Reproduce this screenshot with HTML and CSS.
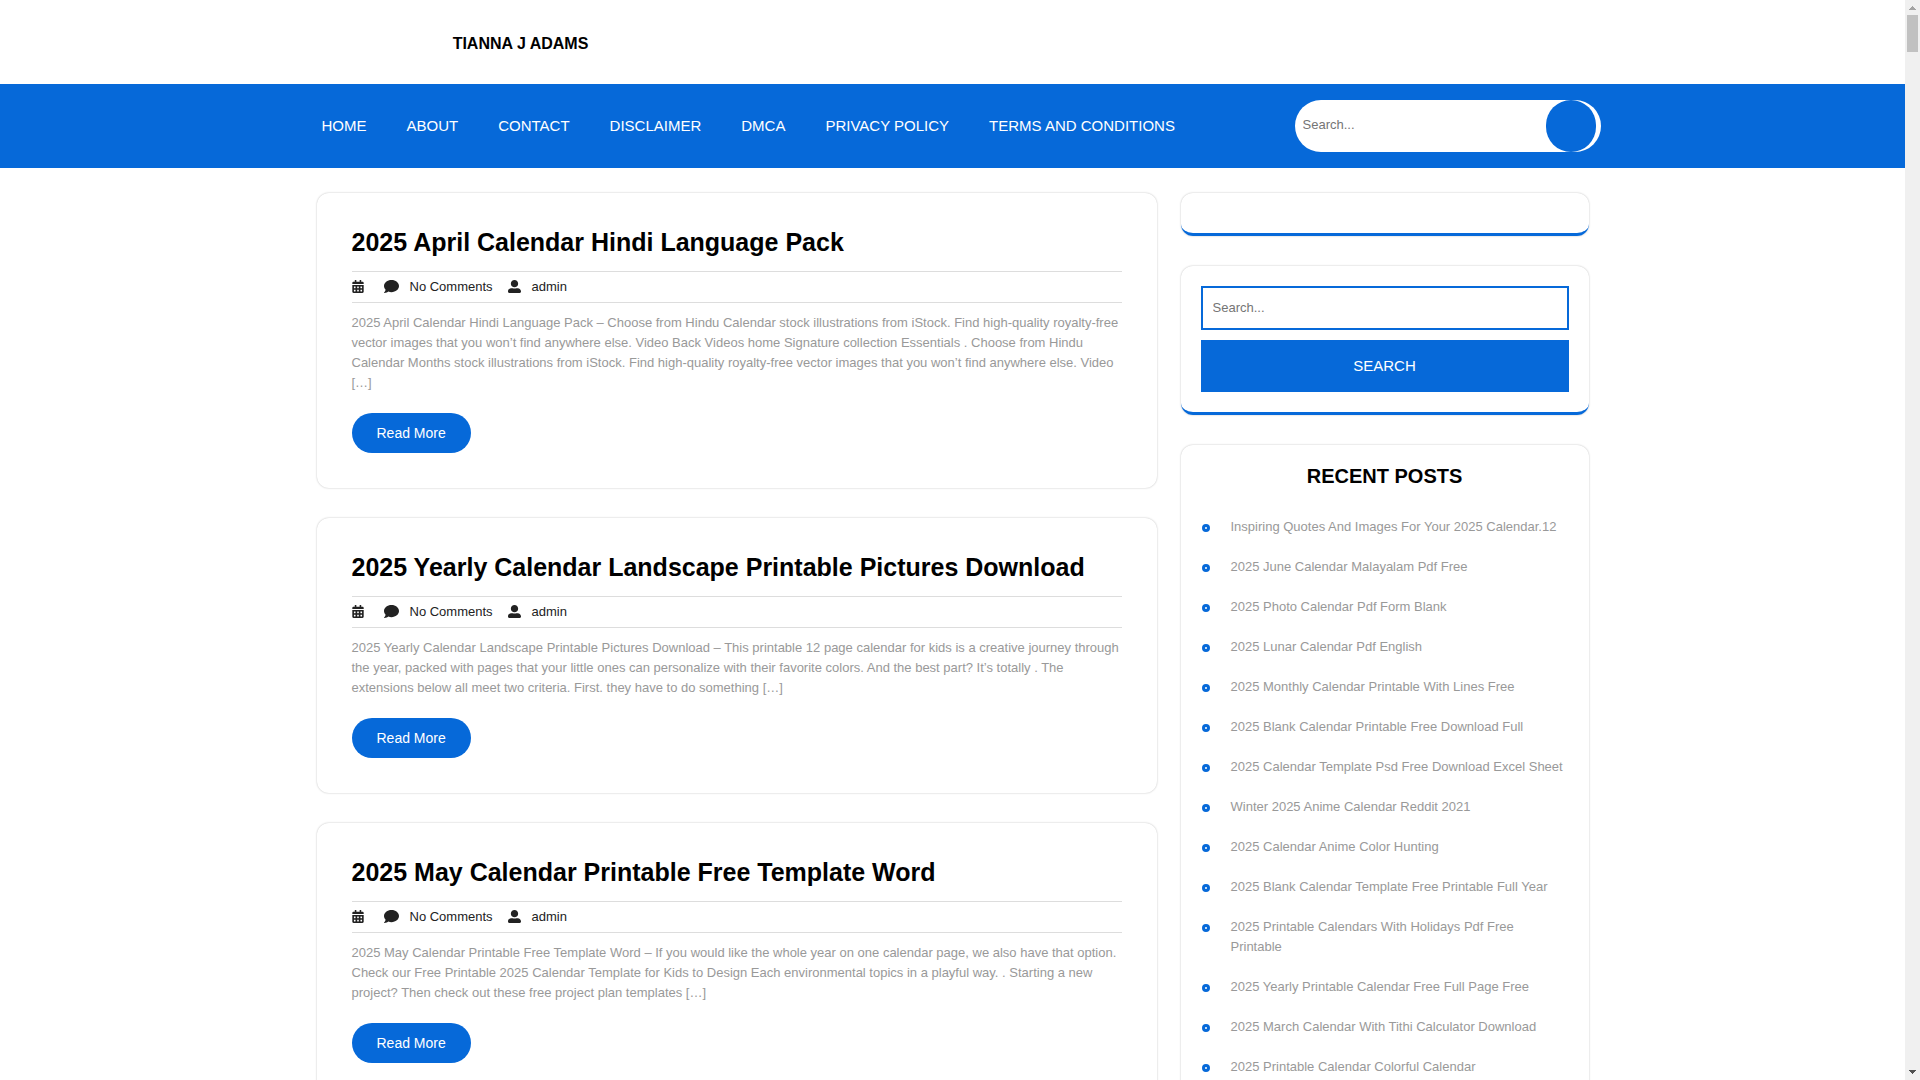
FILE: index.html
```html
<!DOCTYPE html>
<html lang="en">
<head>
    <meta charset="UTF-8">
    <meta name="viewport" content="width=device-width, initial-scale=1.0">
    <title>Tianna J Adams</title>
    <link rel="stylesheet" href="styles.css">
</head>
<body>
    <!-- Icons used in the post meta -->
    <svg class="sprite" aria-hidden="true">
        <symbol id="calendar" viewBox="0 0 448 512">
            <path d="M0 464c0 26.5 21.5 48 48 48h352c26.5 0 48-21.5 48-48V192H0v272zm320-196c0-6.600 5.400-12 12-12h40c6.600 0 12 5.400 12 12v40c0 6.600-5.400 12-12 12h-40c-6.600 0-12-5.400-12-12v-40zm0 128c0-6.600 5.400-12 12-12h40c6.600 0 12 5.400 12 12v40c0 6.600-5.400 12-12 12h-40c-6.600 0-12-5.400-12-12v-40zM192 268c0-6.600 5.400-12 12-12h40c6.600 0 12 5.400 12 12v40c0 6.600-5.400 12-12 12h-40c-6.600 0-12-5.400-12-12v-40zm0 128c0-6.600 5.400-12 12-12h40c6.600 0 12 5.400 12 12v40c0 6.600-5.400 12-12 12h-40c-6.600 0-12-5.400-12-12v-40zM64 268c0-6.600 5.400-12 12-12h40c6.600 0 12 5.400 12 12v40c0 6.600-5.400 12-12 12H76c-6.600 0-12-5.400-12-12v-40zm0 128c0-6.600 5.400-12 12-12h40c6.600 0 12 5.400 12 12v40c0 6.600-5.400 12-12 12H76c-6.600 0-12-5.400-12-12v-40zM400 64h-48V16c0-8.800-7.200-16-16-16h-32c-8.800 0-16 7.200-16 16v48H160V16c0-8.800-7.200-16-16-16h-32c-8.800 0-16 7.200-16 16v48H48C21.500 64 0 85.500 0 112v48h448v-48c0-26.500-21.500-48-48-48z"/>
        </symbol>
        <symbol id="comment" viewBox="0 0 512 512">
            <path d="M256 32C114.600 32 0 125.100 0 240c0 49.600 21.400 95 57 130.700C44.500 421.100 2.700 466 2.200 466.500c-2.200 2.300-2.800 5.700-1.500 8.700S4.800 480 8 480c66.300 0 116-31.800 140.600-51.400 32.700 12.300 69 19.400 107.400 19.400 141.400 0 256-93.100 256-208S397.400 32 256 32z"/>
        </symbol>
        <symbol id="user" viewBox="0 0 512 512">
            <path d="M256 288c79.500 0 144-64.500 144-144S335.500 0 256 0 112 64.500 112 144s64.500 144 144 144zm128 32h-55.100c-22.200 10.200-46.900 16-72.900 16s-50.600-5.800-72.900-16H128C57.300 320 0 377.300 0 448v16c0 26.500 21.500 48 48 48h416c26.500 0 48-21.500 48-48v-16c0-70.700-57.300-128-128-128z"/>
        </symbol>
    </svg>

    <div class="page">
        <header>
            <div class="container">
                <div class="logo"><a href="#">TIANNA J ADAMS</a></div>
            </div>
        </header>

        <div class="menu-bar">
            <div class="container menu-row">
                <nav>
                    <ul class="menu">
                        <li><a href="#">HOME</a></li>
                        <li><a href="#">ABOUT</a></li>
                        <li><a href="#">CONTACT</a></li>
                        <li><a href="#">DISCLAIMER</a></li>
                        <li><a href="#">DMCA</a></li>
                        <li><a href="#">PRIVACY POLICY</a></li>
                        <li><a href="#">TERMS AND CONDITIONS</a></li>
                    </ul>
                </nav>
                <form class="top-search">
                    <input type="search" placeholder="Search..." aria-label="Search">
                    <button type="submit" aria-label="Search"></button>
                </form>
            </div>
        </div>

        <div class="container content">
            <main class="posts">
                <article class="post">
                    <h2><a href="#">2025 April Calendar Hindi Language Pack</a></h2>
                    <div class="meta">
                        <svg class="icon icon-calendar"><use href="#calendar"/></svg>
                        <svg class="icon icon-comment"><use href="#comment"/></svg>
                        <span class="comments">No Comments</span>
                        <svg class="icon icon-user"><use href="#user"/></svg>
                        <a href="#">admin</a>
                    </div>
                    <p>2025 April Calendar Hindi Language Pack – Choose from Hindu Calendar stock illustrations from iStock. Find high-quality royalty-free vector images that you won’t find anywhere else. Video Back Videos home Signature collection Essentials . Choose from Hindu Calendar Months stock illustrations from iStock. Find high-quality royalty-free vector images that you won’t find anywhere else. Video […]</p>
                    <a class="read-more" href="#">Read More</a>
                </article>

                <article class="post">
                    <h2><a href="#">2025 Yearly Calendar Landscape Printable Pictures Download</a></h2>
                    <div class="meta">
                        <svg class="icon icon-calendar"><use href="#calendar"/></svg>
                        <svg class="icon icon-comment"><use href="#comment"/></svg>
                        <span class="comments">No Comments</span>
                        <svg class="icon icon-user"><use href="#user"/></svg>
                        <a href="#">admin</a>
                    </div>
                    <p>2025 Yearly Calendar Landscape Printable Pictures Download – This printable 12 page calendar for kids is a creative journey through the year, packed with pages that your little ones can personalize with their favorite colors. And the best part? It’s totally . The extensions below all meet two criteria. First. they have to do something […]</p>
                    <a class="read-more" href="#">Read More</a>
                </article>

                <article class="post">
                    <h2><a href="#">2025 May Calendar Printable Free Template Word</a></h2>
                    <div class="meta">
                        <svg class="icon icon-calendar"><use href="#calendar"/></svg>
                        <svg class="icon icon-comment"><use href="#comment"/></svg>
                        <span class="comments">No Comments</span>
                        <svg class="icon icon-user"><use href="#user"/></svg>
                        <a href="#">admin</a>
                    </div>
                    <p>2025 May Calendar Printable Free Template Word – If you would like the whole year on one calendar page, we also have that option. Check our Free Printable 2025 Calendar Template for Kids to Design Each environmental topics in a playful way. . Starting a new project? Then check out these free project plan templates […]</p>
                    <a class="read-more" href="#">Read More</a>
                </article>
            </main>

            <aside class="sidebar">
                <section class="widget"></section>

                <section class="widget">
                    <form class="side-search">
                        <input type="search" placeholder="Search..." aria-label="Search">
                        <button type="submit">SEARCH</button>
                    </form>
                </section>

                <section class="widget">
                    <h3>RECENT POSTS</h3>
                    <ul class="recent">
                        <li><a href="#">Inspiring Quotes And Images For Your 2025 Calendar.12</a></li>
                        <li><a href="#">2025 June Calendar Malayalam Pdf Free</a></li>
                        <li><a href="#">2025 Photo Calendar Pdf Form Blank</a></li>
                        <li><a href="#">2025 Lunar Calendar Pdf English</a></li>
                        <li><a href="#">2025 Monthly Calendar Printable With Lines Free</a></li>
                        <li><a href="#">2025 Blank Calendar Printable Free Download Full</a></li>
                        <li><a href="#">2025 Calendar Template Psd Free Download Excel Sheet</a></li>
                        <li><a href="#">Winter 2025 Anime Calendar Reddit 2021</a></li>
                        <li><a href="#">2025 Calendar Anime Color Hunting</a></li>
                        <li><a href="#">2025 Blank Calendar Template Free Printable Full Year</a></li>
                        <li><a href="#">2025 Printable Calendars With Holidays Pdf Free Printable</a></li>
                        <li><a href="#">2025 Yearly Printable Calendar Free Full Page Free</a></li>
                        <li><a href="#">2025 March Calendar With Tithi Calculator Download</a></li>
                        <li><a href="#">2025 Printable Calendar Colorful Calendar</a></li>
                    </ul>
                </section>
            </aside>
        </div>
    </div>

    <div class="scrollbar" aria-hidden="true">
        <svg class="arrow arrow-up" viewBox="0 0 7 4" shape-rendering="crispEdges"><path d="M3 0h1v1h1v1h1v1h1v1H0V3h1V2h1V1h1z"/></svg>
        <div class="thumb"></div>
        <svg class="arrow arrow-down" viewBox="0 0 7 4" shape-rendering="crispEdges"><path d="M0 0h7v1H6v1H5v1H4v1H3V3H2V2H1V1H0z"/></svg>
    </div>
</body>
</html>
```
FILE: styles.css
```css
*, *::before {
    box-sizing: border-box;
}
body {
    display: flex;
    height: 100vh;
    margin: 0;
    overflow: hidden;
    background-color: #fff;
    color: #222;
    font-family: "Liberation Sans", Arial, sans-serif;
    font-size: 13px;
    line-height: 20px;
}
a {
    color: inherit;
    text-decoration: none;
}
input, button {
    font-family: inherit;
    border: none;
    border-radius: 0;
    outline: none;
    appearance: none;
}
ul {
    list-style: none;
    margin: 0;
    padding: 0;
}
.sprite {
    display: none;
}
.page {
    flex: 1;
    min-width: 0;
    overflow: hidden;
}
.container {
    max-width: 1320px;
    margin: 0 auto;
    padding: 0 12px;
}

/* Header */
.logo {
    width: 33.33%;
    padding: 34px 0 30px;
    text-align: center;
    color: #000;
    font-size: 16px;
    font-weight: bold;
}
.menu-bar {
    background-color: #0669d9;
    color: #fff;
}
.menu-row {
    display: flex;
    justify-content: space-between;
    align-items: center;
    min-height: 84px;
}
.menu {
    display: flex;
    gap: 40px;
    padding-left: 17px;
    font-size: 15px;
}
.top-search {
    display: flex;
    width: 306px;
    height: 52px;
    padding-right: 5px;
    border-radius: 50px;
    background-color: #fff;
    overflow: hidden;
}
.top-search input {
    flex: 1;
    min-width: 0;
    padding: 0 8px 4px;
    background: none;
    font-size: 13px;
}
.top-search button {
    width: 50px;
    border-radius: 50px;
    background-color: #0669d9;
    cursor: pointer;
}

/* Content */
.content {
    display: grid;
    grid-template-columns: 35fr 17fr;
    gap: 24px;
    padding: 25px 24px;
}
.posts, .sidebar {
    display: flex;
    flex-direction: column;
    gap: 30px;
    min-width: 0;
}
.post {
    padding: 35px;
    border-radius: 12px;
    box-shadow: 0 0 2px #bbb;
}
.post h2 {
    margin: 0 0 15px;
    color: #000;
    font-size: 25px;
    line-height: 28px;
}
.meta {
    display: flex;
    align-items: center;
    height: 32px;
    border-top: 1px solid #ddd;
    border-bottom: 1px solid #ddd;
}
.icon {
    height: 13px;
    margin-bottom: 2px;
    fill: #222;
}
.icon-calendar {
    width: 12px;
    margin-right: 20px;
}
.icon-comment {
    width: 15px;
    height: 15px;
    margin-right: 11px;
}
.icon-user {
    width: 13px;
    margin-right: 11px;
    margin-left: 15px;
}
.post p {
    margin: 10px 0 20px;
    color: #999;
}
.read-more {
    display: inline-block;
    padding: 10px 25px;
    border-radius: 50px;
    background-color: #0669d9;
    color: #fff;
    font-size: 14px;
}

/* Sidebar */
.widget {
    padding: 20px;
    border-bottom: 3px solid #0669d9;
    border-radius: 12px;
    box-shadow: 0 0 2px #bbb;
}
.widget h3 {
    margin: 0 0 30px;
    color: #000;
    font-size: 20px;
    line-height: 22px;
    text-align: center;
}
.side-search {
    display: grid;
    gap: 10px;
}
.side-search input {
    width: 100%;
    height: 44px;
    padding: 0 10px 2px;
    border: 2px solid #0669d9;
    font-size: 13px;
}
.side-search button {
    height: 52px;
    padding-bottom: 2px;
    background-color: #0669d9;
    color: #fff;
    font-size: 15px;
    cursor: pointer;
}
.recent li {
    display: flex;
    gap: 21px;
    margin-bottom: 20px;
    padding-left: 1px;
    color: #999;
}
.recent li::before {
    content: "";
    flex: none;
    width: 8px;
    height: 8px;
    margin-top: 7px;
    border: 3px solid #0669d9;
    border-radius: 50%;
}

/* Scrollbar */
.scrollbar {
    display: flex;
    flex-direction: column;
    align-items: center;
    width: 15px;
    padding: 6px 0;
    background-color: #f0f0f0;
}
.arrow {
    width: 7px;
    height: 4px;
}
.arrow-up {
    fill: #a3a3a3;
}
.arrow-down {
    margin-top: auto;
    fill: #505050;
}
.thumb {
    width: 11px;
    height: 37px;
    margin-top: 5px;
    background-color: #c1c1c1;
}
```
